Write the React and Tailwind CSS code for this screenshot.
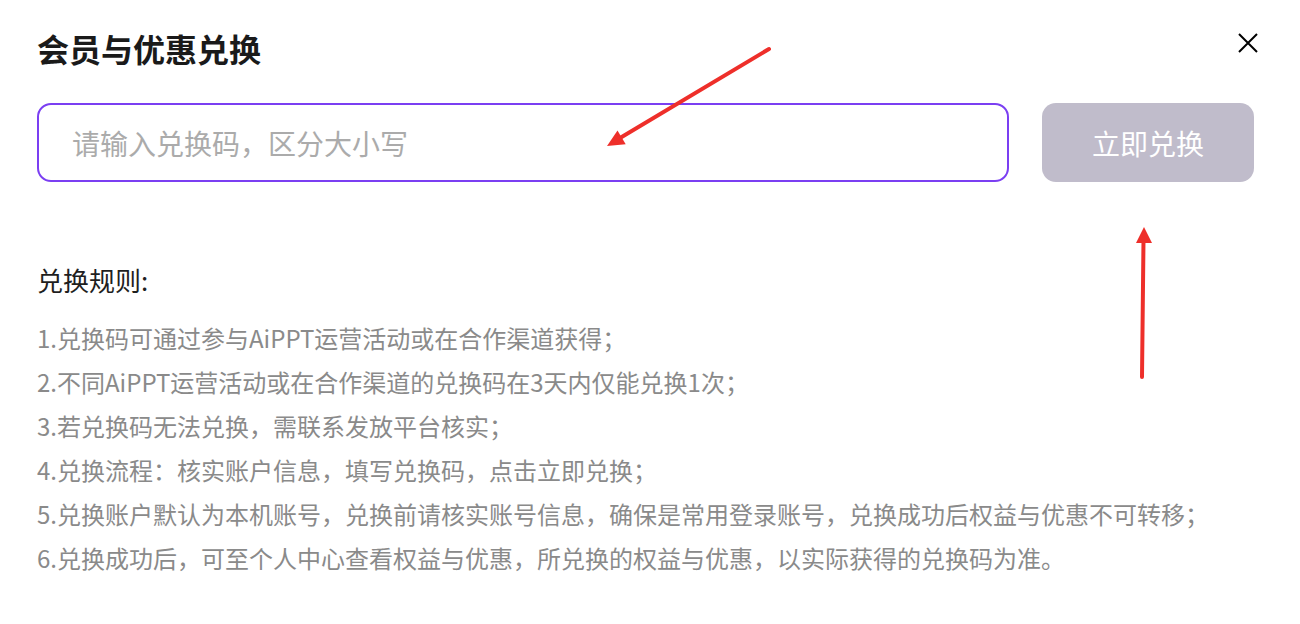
import React, { useState } from "react";

const rules = [
  "1.兑换码可通过参与AiPPT运营活动或在合作渠道获得；",
  "2.不同AiPPT运营活动或在合作渠道的兑换码在3天内仅能兑换1次；",
  "3.若兑换码无法兑换，需联系发放平台核实；",
  "4.兑换流程：核实账户信息，填写兑换码，点击立即兑换；",
  "5.兑换账户默认为本机账号，兑换前请核实账号信息，确保是常用登录账号，兑换成功后权益与优惠不可转移；",
  "6.兑换成功后，可至个人中心查看权益与优惠，所兑换的权益与优惠，以实际获得的兑换码为准。",
];

const App = () => {
  const [code, setCode] = useState("");

  return (
    <div
      className="relative min-h-[624px] bg-white pl-[37px] pr-[46px] pt-[28px]"
      style={{ fontFamily: '"PingFang SC", "Noto Sans CJK SC", "Noto Sans", sans-serif' }}
    >
      <div className="flex items-start justify-between">
        <h1 className="text-[32px] leading-[40px] font-bold text-[#1a1a1a]">会员与优惠兑换</h1>
        <button className="mt-[5px] -mr-[4px] text-black">
          <svg width="20" height="20" viewBox="0 0 20 20" fill="none" stroke="currentColor" strokeWidth="2">
            <path d="M1 1L19 19M19 1L1 19" />
          </svg>
        </button>
      </div>

      <div className="mt-[35px] flex gap-[33px]">
        <input
          value={code}
          onChange={(e) => setCode(e.target.value)}
          placeholder="请输入兑换码，区分大小写"
          className="h-[79px] flex-1 rounded-[14px] border-2 border-[#7b3ff2] px-[33px] text-[28px] text-[#333] outline-none placeholder:text-[#ababab]"
        />
        <button className="h-[79px] w-[212px] rounded-[14px] bg-[#c0bccb] text-[28px] text-white">
          立即兑换
        </button>
      </div>

      <h2 className="mt-[80px] text-[26px] leading-[36px] text-[#1f1f1f]">兑换规则:</h2>
      <div className="mt-[18px] text-[24px] leading-[44px] text-[#8a8a8a]">
        {rules.map((r) => (
          <p key={r}>{r}</p>
        ))}
      </div>

      {/* annotation arrows */}
      <svg
        className="pointer-events-none absolute inset-0 h-full w-full"
        viewBox="0 0 1300 624"
        preserveAspectRatio="none"
      >
        <g stroke="#ee2f2a" strokeWidth="4" strokeLinecap="round" fill="#ee2f2a">
          <line x1="769" y1="49" x2="620" y2="138" />
          <polygon points="607,146 617.5,130.4 625.7,144.2" stroke="none" />
          <line x1="1142" y1="377" x2="1143.5" y2="240" />
          <polygon points="1144,227 1136,243 1152,243" stroke="none" />
        </g>
      </svg>
    </div>
  );
};

export default App;
